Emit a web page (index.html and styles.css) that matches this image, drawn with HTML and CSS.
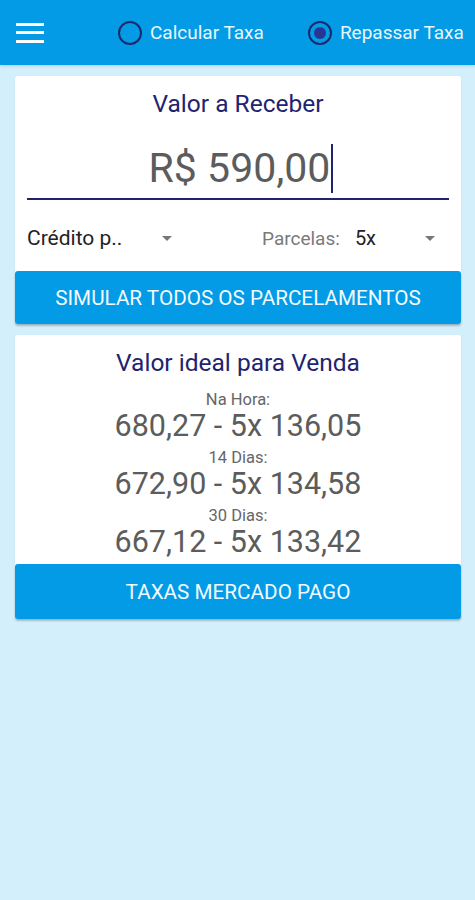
FILE: index.html
```html
<!DOCTYPE html>
<html lang="pt-BR">
<head>
  <meta charset="UTF-8" />
  <title>Taxas Mercado Pago</title>
  <link rel="stylesheet" href="styles.css">
</head>
<body>

  <header class="topbar">
    <button class="menu-btn" aria-label="Menu">
      <span></span><span></span><span></span>
    </button>
    <label class="radio">
      <span class="radio-circle"></span>
      <span>Calcular Taxa</span>
    </label>
    <label class="radio">
      <span class="radio-circle checked"></span>
      <span>Repassar Taxa</span>
    </label>
  </header>

  <main>
    <section class="card">
      <h2 class="card-title">Valor a Receber</h2>
      <div class="amount-field">
        <span class="amount">R$ 590,00</span><span class="cursor"></span>
      </div>
      <div class="selects">
        <div class="select select-type">
          <span class="select-text">Crédito p..</span>
          <span class="arrow"></span>
        </div>
        <div class="select select-parcelas">
          <span class="select-label">Parcelas:</span>
          <span class="select-value">5x</span>
          <span class="arrow"></span>
        </div>
      </div>
      <button class="action">SIMULAR TODOS OS PARCELAMENTOS</button>
    </section>

    <section class="card">
      <h2 class="card-title">Valor ideal para Venda</h2>
      <div class="results">
        <div class="result">
          <div class="result-label">Na Hora:</div>
          <div class="result-value">680,27 - 5x 136,05</div>
        </div>
        <div class="result">
          <div class="result-label">14 Dias:</div>
          <div class="result-value">672,90 - 5x 134,58</div>
        </div>
        <div class="result">
          <div class="result-label">30 Dias:</div>
          <div class="result-value">667,12 - 5x 133,42</div>
        </div>
      </div>
      <button class="action action-tall">TAXAS MERCADO PAGO</button>
    </section>
  </main>

</body>
</html>
```

FILE: styles.css
```css
* {
  box-sizing: border-box;
  margin: 0;
  padding: 0;
}

html, body {
  height: 100%;
  font-family: Roboto, 'Liberation Sans', sans-serif;
  background: #d3effc;
}

.topbar {
  height: 65px;
  background-color: #039be5;
  display: flex;
  align-items: center;
  padding: 0 0 0 16px;
  box-shadow: 0 1px 3px rgba(0,0,0,0.15);
  white-space: nowrap;
}

.menu-btn {
  flex-shrink: 0;
  width: 28px;
  height: 20px;
  border: none;
  background: none;
  display: flex;
  flex-direction: column;
  justify-content: space-between;
  margin-right: 74px;
}

.menu-btn span {
  display: block;
  height: 3px;
  background: white;
}

.radio {
  flex-shrink: 0;
  display: flex;
  align-items: center;
  color: #e8f6fd;
  font-size: 19px;
  margin-right: 44px;
}

.radio:last-child {
  margin-right: 0;
}

.radio-circle {
  flex-shrink: 0;
  width: 24px;
  height: 24px;
  border: 2px solid #1a2a6c;
  border-radius: 50%;
  margin-right: 8px;
  display: flex;
  align-items: center;
  justify-content: center;
}

.radio-circle.checked::after {
  content: "";
  width: 12px;
  height: 12px;
  border-radius: 50%;
  background: #283593;
}

main {
  padding: 11px 14px 0 15px;
}

.card {
  background: white;
  border-radius: 3px;
  margin-bottom: 11px;
  box-shadow: 0 1px 2px rgba(0,0,0,0.08);
}

.card-title {
  font-size: 24.5px;
  font-weight: normal;
  color: #1f2470;
  text-align: center;
  line-height: 30px;
  padding-top: 13px;
}

.amount-field {
  margin: 25px 12px 0 12px;
  border-bottom: 2px solid #1f2470;
  padding-bottom: 5px;
  display: flex;
  justify-content: center;
}

.amount {
  font-size: 41px;
  line-height: 48px;
  color: #5c5c5c;
  padding-left: 6px;
}

.cursor {
  width: 2px;
  height: 49px;
  background: #1f2470;
  margin-left: 1px;
}

.selects {
  display: flex;
  align-items: center;
  height: 40px;
  margin-top: 18px;
  padding: 0 12px;
  color: #222;
}

.select {
  display: flex;
  align-items: center;
}

.select-text {
  font-size: 21px;
  width: 135px;
}

.select-parcelas {
  margin-left: 90px;
}

.select-label {
  font-size: 19px;
  color: #7a7a7a;
  margin-right: 15px;
}

.select-value {
  font-size: 20px;
  width: 70px;
}

.arrow {
  width: 0;
  height: 0;
  border-left: 5px solid transparent;
  border-right: 5px solid transparent;
  border-top: 5px solid #777;
}

.action {
  display: block;
  width: 100%;
  height: 53px;
  margin-top: 13px;
  border: none;
  border-radius: 3px;
  background-color: #039be5;
  color: #f2faff;
  font-family: Roboto, 'Liberation Sans', sans-serif;
  font-size: 20.7px;
  box-shadow: 0 2px 2px rgba(0,0,0,0.2);
}

.action-tall {
  height: 55px;
  margin-top: 6px;
}

.results {
  margin-top: 13px;
  text-align: center;
}

.result + .result {
  margin-top: 7px;
}

.result-label {
  font-size: 16.5px;
  line-height: 18px;
  color: #666;
}

.result-value {
  font-size: 30.5px;
  line-height: 33px;
  color: #5c5c5c;
}
```
